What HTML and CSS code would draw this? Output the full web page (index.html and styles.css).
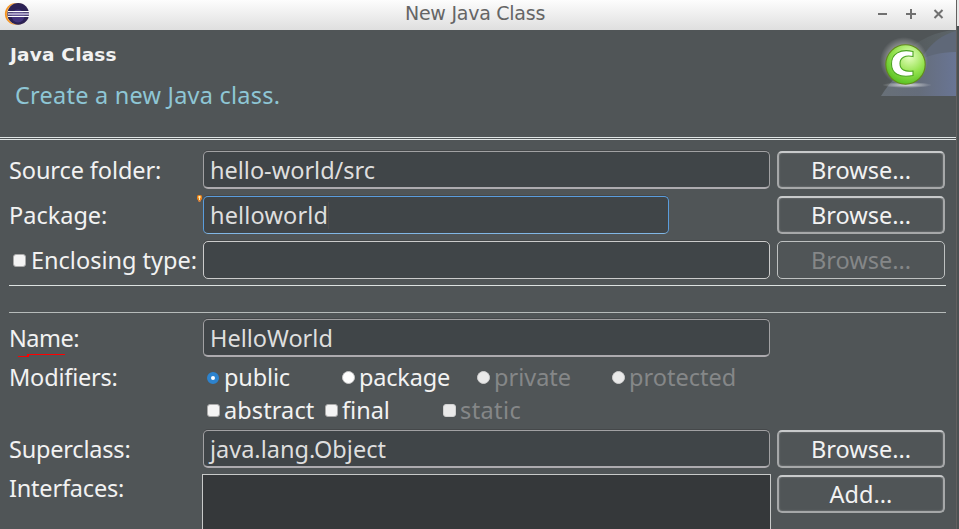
FILE: index.html
```html
<!DOCTYPE html>
<html lang="en">
<head>
<meta charset="utf-8">
<title>New Java Class</title>
<link rel="stylesheet" href="styles.css">
</head>
<body>
<div class="screen">
<div class="window">
  <header class="titlebar">
    <svg class="app-icon" width="26" height="26" viewBox="0 0 26 26">
      <circle cx="12.8" cy="11.9" r="10.9" fill="#f7941e"/>
      <circle cx="14.6" cy="11.9" r="10.9" fill="#f0c58e"/>
      <circle cx="15.2" cy="11.9" r="10.8" fill="#2c2255"/>
      <circle cx="15" cy="14" r="6.5" fill="#43347b"/>
      <path d="M5 9.500H26M5 14.500H26" stroke="#fff" stroke-width="1.1"/>
      <path d="M5 12H26" stroke="#a9a0c6" stroke-width="2.6"/>
    </svg>
    <h1 class="title">New Java Class</h1>
    <svg class="controls" width="68" height="14" viewBox="0 0 68 14" fill="none" stroke="#707070" stroke-width="2">
      <path d="M1 7H10M29 7H39M34 2V12"/>
      <path d="M57.5 3L65.5 11M65.5 3L57.5 11"/>
    </svg>
  </header>
  <section class="banner">
    <div>
      <h2 class="heading">Java Class</h2>
      <p class="message">Create a new Java class.</p>
    </div>
    <svg class="class-icon" width="75" height="66" viewBox="0 0 75 66">
      <defs>
        <linearGradient id="sweep" x1="0" y1="0" x2="1" y2="0"><stop offset="0" stop-color="#687078"/><stop offset=".5" stop-color="#656d7b"/><stop offset="1" stop-color="#697594"/></linearGradient>
        <linearGradient id="far" x1="0" y1="0" x2="1" y2="0"><stop offset="0" stop-color="#505557"/><stop offset="1" stop-color="#5c6468"/></linearGradient>
        <radialGradient id="ball" cx=".6" cy=".3" r=".8"><stop offset="0" stop-color="#e6ffc0"/><stop offset=".5" stop-color="#96e350"/><stop offset="1" stop-color="#48b816"/></radialGradient>
        <radialGradient id="glow"><stop offset=".65" stop-color="#fff" stop-opacity=".35"/><stop offset="1" stop-color="#fff" stop-opacity="0"/></radialGradient>
        <radialGradient id="floor"><stop offset="0" stop-color="#fff" stop-opacity=".75"/><stop offset="1" stop-color="#fff" stop-opacity="0"/></radialGradient>
      </defs>
      <path d="M0 66C6 36 34 2 75 0V66Z" fill="url(#far)"/>
      <path d="M30 66C32 34 48 8 75 1V66Z" fill="#5f6878"/>
      <path d="M0 66C18 37 44 22 75 22V66Z" fill="url(#sweep)"/>
      <circle cx="23" cy="31" r="24" fill="url(#glow)"/>
      <ellipse cx="26" cy="55" rx="25" ry="3" fill="url(#floor)"/>
      <circle cx="24.5" cy="34.5" r="19.7" fill="url(#ball)" stroke="#638a1b" stroke-width="1.1"/>
      <path d="M32 21.5V26.5C24 25 19 27.500 19 33.500C19 40 24 42 32 41V45.500C18 48 10.500 43.500 10.500 34C10.500 24 19 18.500 32 21.500Z" fill="#fff" stroke="#4ba222" stroke-width="1.1"/>
    </svg>
  </section>
  <main class="form">
    <div class="row">
      <label class="label"><span class="t-source">Source folder:</span></label>
      <div class="field"><span class="t-src">hello-world/src</span></div>
      <button class="button"><span class="t-browse">Browse...</span></button>
    </div>
    <div class="row">
      <label class="label"><span class="t-package">Package:</span></label>
      <div class="field focused"><span class="t-pkg">helloworld</span><i class="caret"></i>
        <svg class="hint" width="5" height="8" viewBox="0 0 5 8"><rect width="5" height="5" rx="1.5" fill="#ec8218"/><path d="M1 5H4V6L3 7H2L1 6Z" fill="#d4823e"/><path d="M1.500 1H3.500V3H3V5H2V3H1.500Z" fill="#fff0b8"/></svg>
      </div>
      <button class="button"><span class="t-browse">Browse...</span></button>
    </div>
    <div class="row">
      <label class="label"><i class="box enclosing"></i><span class="t-enclosing">Enclosing type:</span></label>
      <div class="field thin"></div>
      <button class="button disabled" disabled><span class="t-browse">Browse...</span></button>
    </div>
    <div class="rules"></div>
    <div class="row">
      <label class="label name"><span class="t-name">Name:</span>
        <svg class="underline" width="50" height="4" viewBox="0 0 50 4" shape-rendering="crispEdges" fill="#ff0000"><rect x="9" y="0" width="38" height="1"/><rect x="9" y="1" width="2" height="1"/><rect x="0" y="2" width="11" height="1"/></svg></label>
      <div class="field"><span class="t-hello">HelloWorld</span></div>
    </div>
    <div class="row options access">
      <div class="label"><span class="t-mod">Modifiers:</span></div>
      <label class="option"><i class="dot on"></i><span class="t-public">public</span></label>
      <label class="option"><i class="dot"></i><span class="t-pack">package</span></label>
      <label class="option off"><i class="dot"></i><span class="t-private">private</span></label>
      <label class="option off"><i class="dot"></i><span class="t-protected">protected</span></label>
    </div>
    <div class="row options flags">
      <div class="label"></div>
      <label class="option abstract"><i class="box"></i><span class="t-abstract">abstract</span></label>
      <label class="option final"><i class="box"></i><span class="t-final">final</span></label>
      <label class="option off"><i class="box"></i><span class="t-static">static</span></label>
    </div>
    <div class="row">
      <label class="label"><span class="t-super">Superclass:</span></label>
      <div class="field"><span class="t-object">java.lang.Object</span></div>
      <button class="button"><span class="t-browse">Browse...</span></button>
    </div>
    <div class="row interfaces">
      <label class="label"><span class="t-interfaces">Interfaces:</span></label>
      <div class="list"></div>
      <button class="button"><span class="t-add">Add...</span></button>
    </div>
  </main>
</div>
<div class="edge"></div>
</div>
</body>
</html>
```

FILE: styles.css
```css
* { box-sizing: border-box; }
body { margin: 0; overflow: hidden; font-family: "Noto Sans", sans-serif; font-size: 23.5px; color: #f2f2f2; }
h1, h2, p { margin: 0; }
i { display: block; flex: none; }
svg { display: block; flex: none; }
span { white-space: nowrap; }
.screen { display: flex; width: 959px; height: 529px; overflow: hidden; }
.window { width: 956px; background: #505557; }
.edge { width: 3px; background: linear-gradient(#e8e8e8 0 26px, #4b5153 26px); border-left: 1px solid #62605f; }
.titlebar { display: grid; grid-template-columns: 100px 1fr 100px; align-items: center; height: 30px; background: linear-gradient(#fdfdfd, #dfdfdf); }
.app-icon { margin: 0 0 0 3px; }
.title { text-align: center; font: 19px/26px "DejaVu Sans", sans-serif; color: #656565; padding: 0 6px 4px 0; letter-spacing: -.25px; }
.controls { justify-self: end; margin: 0 11px 3px 0; }
.banner { display: flex; justify-content: space-between; height: 110px; border-bottom: 3px double #e1e6e6; }
.class-icon { overflow: visible; }
.heading { margin: 12px 0 0 10px; font: bold 18.5px/26px "DejaVu Sans", sans-serif; letter-spacing: .2px; }
.message { margin: 10px 0 0 15px; line-height: 34px; color: #8ec6d5; letter-spacing: .23px; }
.form { padding: 11px 11px 0 9px; }
.row { display: flex; height: 38px; margin-bottom: 7px; }
.label { display: flex; align-items: center; flex: none; width: 194px; height: 38px; }
.field { display: flex; align-items: center; position: relative; flex: none; width: 567px; height: 38px; margin-right: 7px; padding-left: 6px; border: 1px solid #a1a1a3; border-bottom: 2px solid #adabaf; border-radius: 5px; background: #404548; color: #dedede; box-shadow: 0 -1px 0 #45484a; }
.field.focused { width: 466px; margin-right: 108px; border: 1px solid #5a9ddd; border-bottom-color: #81b7e5; }
.field.thin { border: 1px solid #cbcbcb; }
.caret { width: 1px; height: 27px; background: #514c4b; }
.hint { position: absolute; left: -7px; top: -2px; }
.button { flex: none; width: 168px; height: 38px; padding: 0; border: 2px solid #a6a8a9; border-top-color: #c8cacb; border-radius: 5px; background: #505557; color: #f2f2f2; font: inherit; line-height: 34px; box-shadow: inset 0 0 2px #888c8d; }
.button.disabled { border: 1px solid #bec1c1; color: #858788; box-shadow: none; line-height: 36px; }
.rules { height: 28px; margin: -1px 0 6px; border-top: 1px solid #dde2e1; border-bottom: 1px solid #b6bbba; width: 937px; }
.name { position: relative; }
.underline { position: absolute; left: 9px; top: 35px; }
.box { width: 13px; height: 13px; border: 1px solid #aaa; border-radius: 3px; background: #f4f4f4; }
.box.enclosing { margin: 0 5px 0 4px; }
.dot { width: 13px; height: 13px; border-radius: 50%; border: 1px solid #c9c9c9; background: #fff; }
.dot.on { width: 12px; height: 12px; border: 4px solid #2d83ce; margin-right: 1px; }
.options { height: 33px; margin: 0; }
.options .label, .option { height: 33px; }
.options span { margin-top: -2px; }
.access { margin-top: -3px; }
.option { display: flex; align-items: center; width: 135px; gap: 4px; padding-left: 4px; }
.option.abstract { width: 118px; }
.option.final { width: 118px; }
.option.off { color: #858788; }
.off .dot, .off .box { background: #e9e9e9; border-color: #d0d0d0; }
.flags { margin-bottom: 3px; }
.interfaces { margin-top: -1px; height: 60px; }
.interfaces .label { height: 28px; }
.list { width: 569px; height: 60px; margin: 0 6px 0 -1px; border: 1px solid #c8cac9; background: #35383a; }
.interfaces .button { margin-top: 1px; }
.t-source { letter-spacing: -.1px; }
.t-pkg { letter-spacing: .15px; }
.t-mod, .t-super, .t-interfaces, .t-pack { letter-spacing: -.2px; }
.t-public { letter-spacing: -.15px; }
.t-name { letter-spacing: -.5px; }
.t-abstract { letter-spacing: .1px; }
.t-static { letter-spacing: .4px; }
```
